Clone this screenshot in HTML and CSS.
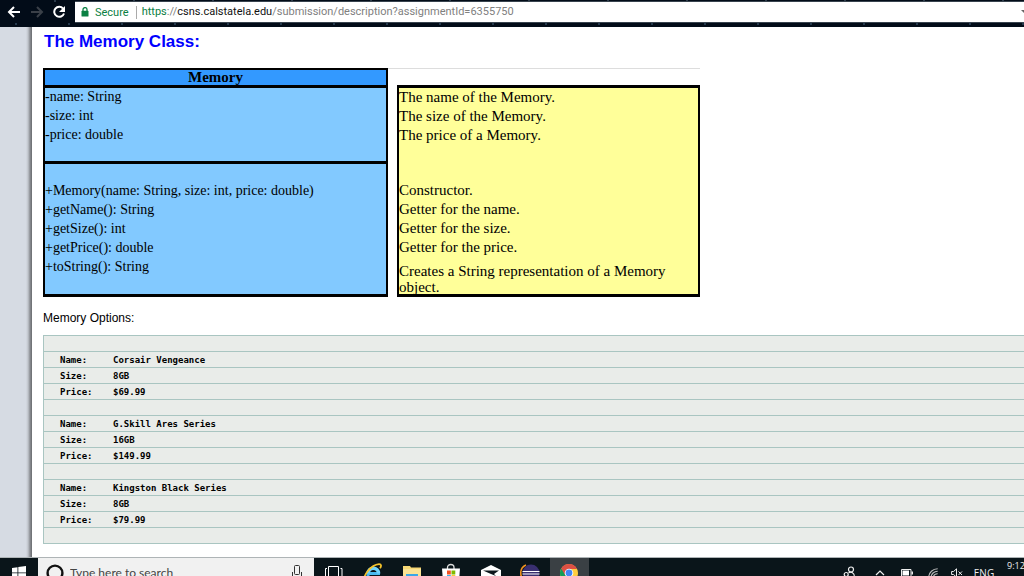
FILE: index.html
```html
<!DOCTYPE html>
<html lang="en">
<head>
<meta charset="utf-8">
<title>The Memory Class</title>
<link rel="stylesheet" href="styles.css">
</head>
<body>
<header class="toolbar">
  <button class="nav-btn" aria-label="Back"><svg width="14" height="14" viewBox="0 0 14 14"><path d="M13 7H2M7 2L2 7l5 5" fill="none" stroke="#fff" stroke-width="2"/></svg></button>
  <button class="nav-btn" aria-label="Forward" disabled><svg width="14" height="14" viewBox="0 0 14 14"><path d="M1 7h11M7 2l5 5-5 5" fill="none" stroke="#3a4048" stroke-width="2"/></svg></button>
  <button class="nav-btn" aria-label="Reload"><svg width="14" height="14" viewBox="0 0 14 14"><path d="M10 3.500A5 5 0 1 0 11 8.500" fill="none" stroke="#fff" stroke-width="2"/><path d="M12 1v6H6z" fill="#fff"/></svg></button>
  <div class="address">
    <svg class="lock" width="8" height="10" viewBox="0 0 8 10"><path d="M2 4V2.6a2 2 0 0 1 4 0V4" fill="none" stroke="#0b8043" stroke-width="1.3"/><rect x="0.5" y="3.8" width="7" height="5.7" rx="0.6" fill="#0b8043"/></svg>
    <span class="secure">Secure</span>
    <div class="url" role="textbox" contenteditable="true" spellcheck="false" aria-label="Address"><span class="scheme">https</span>://<span class="host">csns.calstatela.edu</span>/submission/description?assignmentId=6355750</div>
    <svg class="drop" width="3" height="4" viewBox="0 0 3 4"><path d="M0 0h3v3z" fill="#666"/></svg>
  </div>
</header>
<div class="page">
  <main class="content">
    <h1 class="title">The Memory Class:</h1>
    <div class="diagram">
      <section class="uml">
        <h2 class="uml-name">Memory</h2>
        <ul class="uml-fields">
          <li>-name: String</li>
          <li>-size: int</li>
          <li>-price: double</li>
        </ul>
        <ul class="uml-methods">
          <li>+Memory(name: String, size: int, price: double)</li>
          <li>+getName(): String</li>
          <li>+getSize(): int</li>
          <li>+getPrice(): double</li>
          <li>+toString(): String</li>
        </ul>
      </section>
      <section class="notes">
        <ul class="note-fields">
          <li>The name of the Memory.</li>
          <li>The size of the Memory.</li>
          <li>The price of a Memory.</li>
        </ul>
        <ul class="note-methods">
          <li>Constructor.</li>
          <li>Getter for the name.</li>
          <li>Getter for the size.</li>
          <li>Getter for the price.</li>
          <li class="note-wrap">Creates a String representation of a Memory object.</li>
        </ul>
      </section>
    </div>
    <p class="lead">Memory Options:</p>
    <table class="options">
      <tbody>
        <tr><td colspan="2"></td></tr>
        <tr><th scope="row">Name:</th><td>Corsair Vengeance</td></tr>
        <tr><th scope="row">Size:</th><td>8GB</td></tr>
        <tr><th scope="row">Price:</th><td>$69.99</td></tr>
        <tr><td colspan="2"></td></tr>
        <tr><th scope="row">Name:</th><td>G.Skill Ares Series</td></tr>
        <tr><th scope="row">Size:</th><td>16GB</td></tr>
        <tr><th scope="row">Price:</th><td>$149.99</td></tr>
        <tr><td colspan="2"></td></tr>
        <tr><th scope="row">Name:</th><td>Kingston Black Series</td></tr>
        <tr><th scope="row">Size:</th><td>8GB</td></tr>
        <tr><th scope="row">Price:</th><td>$79.99</td></tr>
        <tr><td colspan="2"></td></tr>
      </tbody>
    </table>
  </main>
</div>
<footer class="taskbar">
  <button class="start" aria-label="Start"><svg width="14" height="14" viewBox="0 0 14 14"><path d="M0 2l5.5-.8v5.3H0zM6.3 1L14 0v6.5H6.3zM0 7.3h5.5v5.3L0 11.9zM6.3 7.3H14V14l-7.7-1z" fill="#fff"/></svg></button>
  <div class="search">
    <svg width="18" height="18" viewBox="0 0 18 18"><circle cx="9" cy="9" r="7.4" fill="none" stroke="#111" stroke-width="2.4"/></svg>
    <input class="search-input" type="text" placeholder="Type here to search" aria-label="Type here to search">
    <button class="mic" aria-label="Voice search"><svg width="10" height="16" viewBox="0 0 10 16"><rect x="2.5" y="0.5" width="5" height="9" rx="1" fill="none" stroke="#333"/><path d="M0.5 7v4.5h9V7M5 11.500V15" fill="none" stroke="#333"/></svg></button>
  </div>
  <nav class="apps">
    <button aria-label="Task view"><svg width="18" height="14" viewBox="0 0 18 14"><path d="M3.500.5h10v13h-10zM2 2.500H.5v9H2M15.500 2.500H17v9h-1.500" fill="none" stroke="#fff"/></svg></button>
    <button aria-label="Internet Explorer"><svg width="20" height="20" viewBox="0 0 20 20"><path d="M15.500 13.500a5.500 5.500 0 0 1-10.500-3h12" fill="none" stroke="#49b9ee" stroke-width="3"/><path d="M5 10.500a5.300 5.300 0 0 1 10.600 0" fill="none" stroke="#6fd3fb" stroke-width="3.500"/><path d="M2 18C-1 13 8 2 16 1.200c2.500-.2 2.500 2 1 4" fill="none" stroke="#f4c22b" stroke-width="1.800"/></svg></button>
    <button aria-label="File Explorer"><svg width="18" height="16" viewBox="0 0 18 16"><path d="M0 1h7l1 1.500h10V15H0z" fill="#f7d774"/><path d="M0 4h18v11H0z" fill="#fbe394"/><path d="M3 9h12v7H3z" fill="#3ba7e6"/></svg></button>
    <button aria-label="Store"><svg width="20" height="20" viewBox="0 0 20 20"><path d="M6.500 6V4.500C6.500 .5 13 .5 13 4.500V6" fill="none" stroke="#ddd" stroke-width="1.300"/><path d="M1 5.500h18l-1 12.500H2z" fill="#fff"/><path d="M6 7.500h3.800v4H6z" fill="#f25022"/><path d="M10.500 7.500h3.800v4h-3.800z" fill="#7fba00"/><path d="M6 12.200h3.800V16H6z" fill="#00a4ef"/><path d="M10.500 12.200h3.800V16h-3.800z" fill="#ffb900"/></svg></button>
    <button aria-label="Mail"><svg width="20" height="16" viewBox="0 0 20 16"><path d="M0 5l10-5 10 5v11H0z" fill="#fff"/><path d="M2 5.500h16l-5 3.500 2 2-5-2z" fill="#0c161b"/></svg></button>
    <button aria-label="Eclipse"><svg width="20" height="18" viewBox="0 0 20 18"><path d="M6 1C-1 4-1 14 6 17" fill="none" stroke="#f0921e" stroke-width="1.600"/><circle cx="11" cy="9" r="8.500" fill="#392f70"/><path d="M2.500 7.500h17M2.500 10h17M3 12.500h16" stroke="#fff" stroke-width="1.200"/></svg></button>
    <button class="active" aria-label="Chrome"><svg width="18" height="18" viewBox="0 0 18 18"><circle cx="9" cy="9" r="9" fill="#ffcd40"/><path d="M9 9L1.200 4.500A9 9 0 0 0 8 18l4-7z" fill="#109d58"/><path d="M9 9L5 11 1.200 4.500A9 9 0 0 1 17 5H9z" fill="#dd5044"/><circle cx="9" cy="9" r="4.300" fill="#fff"/><circle cx="9" cy="9" r="3.400" fill="#4285f4"/></svg></button>
  </nav>
  <div class="tray">
    <button class="people" aria-label="People"><svg width="12" height="14" viewBox="0 0 12 14"><g fill="none" stroke="#eee" stroke-width="1.200"><circle cx="8" cy="3.500" r="2.500"/><circle cx="3.200" cy="8.500" r="2"/><path d="M5.500 6.800c3-1.500 5.500.2 5.900 3M.6 14c0-4 5-4 5.400 0"/></g></svg></button>
    <button class="more" aria-label="Show hidden icons"><svg width="10" height="6" viewBox="0 0 10 6"><path d="M1 5l4-4 4 4" fill="none" stroke="#eee" stroke-width="1.200"/></svg></button>
    <button class="battery" aria-label="Battery"><svg width="12" height="8" viewBox="0 0 12 8"><path d="M.5.5h9.500v7H.5z" fill="none" stroke="#eee"/><path d="M1.500 1.500H8v5H1.500z" fill="#fff"/><path d="M10.500 2.500H12v3h-1.500z" fill="#eee"/></svg></button>
    <button class="wifi" aria-label="Network"><svg width="10" height="10" viewBox="0 0 10 10"><g fill="none" stroke="#bbb" stroke-width="1.100"><path d="M.7 9.500A9 9 0 0 1 9.700.7M3 9.500A6.600 6.600 0 0 1 9.700 3.200M5.300 9.500A4.300 4.300 0 0 1 9.700 5.700"/></g><circle cx="8.500" cy="9" r="1" fill="#eee"/></svg></button>
    <button class="volume" aria-label="Muted"><svg width="12" height="10" viewBox="0 0 12 10"><path d="M.6 3.500h2L5.500.8v8.400L2.600 6.500h-2zM7.500 3.500l3.500 3.500M11 3.500L7.500 7" fill="none" stroke="#eee"/></svg></button>
    <button class="lang">ENG</button>
    <time class="clock">9:12</time>
  </div>
</footer>
</body>
</html>
```
FILE: styles.css
```css
* { box-sizing: border-box; }
body {
  margin: 0;
  height: 100vh;
  overflow: hidden;
  display: flex;
  flex-direction: column;
  background: #fff;
  color: #000;
  font-family: "Liberation Sans", Arial, sans-serif;
}
button {
  display: flex;
  align-items: center;
  justify-content: center;
  padding: 0;
  border: 0;
  background: none;
  color: inherit;
  font: inherit;
}
svg { display: block; flex: none; }
ul { list-style: none; margin: 0; padding: 0; }

.toolbar {
  flex: none;
  display: flex;
  align-items: center;
  gap: 8px;
  height: 27px;
  padding: 0 0 3px 7px;
  background:
    radial-gradient(circle at 30% 90%, #24384c 0 1px, transparent 1px) 0 0 / 53px 27px,
    radial-gradient(circle at 70% 4%, #2b3a4a 0 1px, transparent 1px) 0 0 / 79px 27px,
    #020c18;
}
.nav-btn { width: 14px; height: 24px; }
.nav-btn + .nav-btn { margin-left: 1px; }
.address {
  flex: 1;
  display: flex;
  align-items: center;
  height: 22px;
  padding-left: 6px;
  border: solid #39444f;
  border-width: 1px 0;
  background: #fff;
  font: 11px/20px Roboto, "Open Sans", sans-serif;
}
.secure {
  margin-left: 6px;
  padding-right: 7px;
  border-right: 1px solid #aaa;
  color: #0b8043;
  line-height: 13px;
}
.url { flex: 1; margin-left: 5px; color: #808080; white-space: nowrap; outline: none; }
.scheme { color: #0b8043; }
.host { color: #111; }

.page {
  flex: 1;
  min-height: 0;
  overflow: hidden;
  display: flex;
  padding-left: 32px;
  background: linear-gradient(90deg, #d6dbe3 26px, #c0c4cb 28px, #8b8e93 30px, #696b6f 32px, #fff 32px);
}
.content { flex: 1; padding: 5px 0 0 11px; }
.title { margin: 0 0 16px 1px; color: #00f; font-size: 17px; line-height: 20px; }

.diagram {
  display: flex;
  align-items: flex-end;
  gap: 9px;
  max-width: 657px;
  border-top: 1px solid #ddd;
  font: 14px/19px "Liberation Serif", serif;
}
.uml {
  flex: 1 1 345px;
  margin-top: -1px;
  border: 2px solid #000;
  border-bottom-width: 3px;
  background: #82c9ff;
}
.uml-name {
  margin: 0;
  background: #3399ff;
  font-size: 15px;
  line-height: 15px;
  text-align: center;
}
.uml-fields, .uml-methods {
  display: flex;
  flex-direction: column;
  gap: 2px;
  border-top: 3px solid #000;
  line-height: 17px;
}
.uml-fields { height: 76px; }
.uml-methods { height: 133px; padding-top: 18px; }
.notes {
  flex: 1 1 303px;
  height: 212px;
  border: solid #000;
  border-width: 3px 2px;
  background: #ffff99;
  font-size: 15px;
}
.note-fields { height: 93px; }
.note-wrap { padding-top: 6px; line-height: 16px; }

.lead { margin: 13px 0 9px; font-size: 12px; line-height: 16px; }
.options {
  width: 100%;
  border-collapse: separate;
  border-spacing: 0;
  border: solid #a9c5c1;
  border-width: 1px 0 0 1px;
  background: #e9ece9;
  font: bold 9px/13px "DejaVu Sans Mono", monospace;
}
.options th, .options td {
  height: 16px;
  padding: 2px 0 0;
  border-bottom: 1px solid #a9c5c1;
  text-align: left;
}
.options th { width: 69px; padding-left: 16px; }

.taskbar {
  flex: none;
  display: flex;
  align-items: flex-start;
  height: 19px;
  overflow: hidden;
  border-top: 1px solid #aeb4b6;
  background: #0a151a;
  color: #eee;
  font: 12px/16px "Open Sans", "Noto Sans", sans-serif;
}
.start { width: 38px; height: 30px; }
.search {
  display: flex;
  align-items: center;
  flex: 0 1 276px;
  height: 30px;
  padding: 0 12px 0 8px;
  background: #f1f1f1;
}
.search-input {
  flex: 1;
  min-width: 0;
  margin-left: 6px;
  padding: 0;
  border: 0;
  background: none;
  font: 12px/16px Lato, "Open Sans", sans-serif;
}
.search-input::placeholder { color: #444; }
.mic { height: 30px; }
.apps { display: flex; flex: 0 1 275px; }
.apps button { flex: 1; height: 30px; }
.apps .active { background: #3a4044; }
.tray { display: flex; margin-left: auto; }
.tray button { height: 30px; }
.people { width: 32px; }
.more { width: 29px; }
.battery, .wifi { width: 26px; }
.volume { width: 22px; }
.tray .lang { width: 32px; font-size: 10px; line-height: 14px; }
.clock { width: 24px; padding-left: 7px; font-size: 9px; line-height: 16px; white-space: nowrap; overflow: hidden; }
```
